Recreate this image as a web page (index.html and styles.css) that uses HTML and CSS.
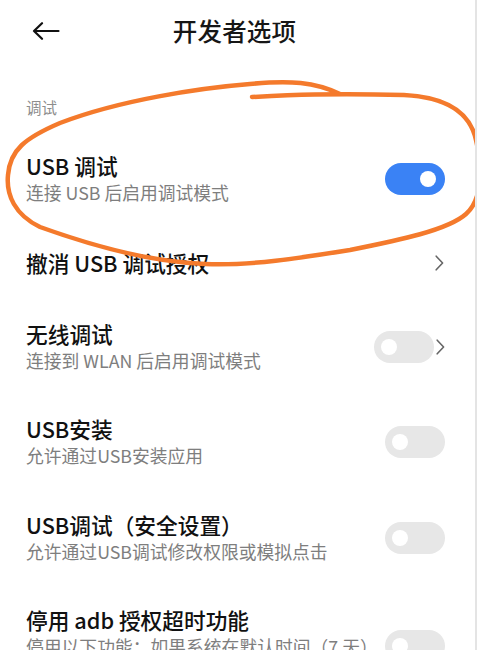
FILE: index.html
```html
<!DOCTYPE html>
<html lang="zh-CN">
<head>
<meta charset="utf-8">
<title>开发者选项</title>
<link rel="stylesheet" href="styles.css">
</head>
<body>
<div class="page">
  <header class="topbar">
    <svg class="back" width="28" height="18" viewBox="0 0 28 18" aria-hidden="true">
      <path d="M26.5 9 H2 M10 1.2 L2 9 L10 16.8" fill="none" stroke="#111" stroke-width="2.2" stroke-linecap="round" stroke-linejoin="round"/>
    </svg>
    <h1 class="title">开发者选项</h1>
  </header>

  <div class="section-label">调试</div>

  <div class="row two">
    <div class="texts">
      <div class="row-title">USB 调试</div>
      <div class="row-sub">连接 USB 后启用调试模式</div>
    </div>
    <div class="switch on"><span class="knob"></span></div>
  </div>

  <div class="row one">
    <div class="texts">
      <div class="row-title">撤消 USB 调试授权</div>
    </div>
    <svg class="chev" width="9" height="16" viewBox="0 0 9 16" aria-hidden="true"><path d="M1.2 1.2 L7.6 8 L1.2 14.8" fill="none" stroke="#666" stroke-width="1.6" stroke-linecap="round" stroke-linejoin="round"/></svg>
  </div>

  <div class="row two">
    <div class="texts">
      <div class="row-title">无线调试</div>
      <div class="row-sub">连接到 WLAN 后启用调试模式</div>
    </div>
    <div class="trail">
      <div class="switch"><span class="knob"></span></div>
      <svg class="chev" width="9" height="16" viewBox="0 0 9 16" aria-hidden="true"><path d="M1.2 1.2 L7.6 8 L1.2 14.8" fill="none" stroke="#666" stroke-width="1.6" stroke-linecap="round" stroke-linejoin="round"/></svg>
    </div>
  </div>

  <div class="row two">
    <div class="texts">
      <div class="row-title">USB安装</div>
      <div class="row-sub">允许通过USB安装应用</div>
    </div>
    <div class="switch"><span class="knob"></span></div>
  </div>

  <div class="row two">
    <div class="texts">
      <div class="row-title">USB调试（安全设置）</div>
      <div class="row-sub">允许通过USB调试修改权限或模拟点击</div>
    </div>
    <div class="switch"><span class="knob"></span></div>
  </div>

  <div class="row two">
    <div class="texts">
      <div class="row-title">停用 adb 授权超时功能</div>
      <div class="row-sub wrap">停用以下功能：如果系统在默认时间（7 天）内未重新连接，则自动撤消 USB 调试授权</div>
    </div>
    <div class="switch"><span class="knob"></span></div>
  </div>

  <svg class="scribble" width="477" height="650" viewBox="0 0 477 650" aria-hidden="true">
    <path d="M252 97 C290 95 330 93 404 95 C445 97 470 112 476 140 C483 170 482 200 466 214 C448 230 400 240 350 250 C300 258 250 266 205 264 C150 262 90 245 40 227 C15 215 6 195 8 175 C10 150 25 138 60 123 C120 100 200 88 250 84 C290 80 315 82 340 94" fill="none" stroke="#f47a2c" stroke-width="4.5" stroke-linecap="round" stroke-linejoin="round"/>
  </svg>
</div>
</body>
</html>
```

FILE: styles.css
```css
html, body {
  margin: 0;
  padding: 0;
  background: #ffffff;
}

body {
  font-family: "Noto Sans CJK SC", "Noto Sans", sans-serif;
  color: #111111;
}

.page {
  position: relative;
  width: 475px;
  height: 650px;
  overflow: hidden;
  border-right: 2px solid #e4e4e4;
  background: #ffffff;
}

.topbar {
  height: 62px;
  display: flex;
  align-items: center;
  justify-content: center;
  position: relative;
}

.back {
  position: absolute;
  left: 32px;
  top: 22px;
}

.title {
  margin: 0;
  font-size: 24.5px;
  font-weight: 500;
  line-height: 30px;
  letter-spacing: 0.2px;
  color: #161616;
  transform: translateX(-3px);
}

.section-label {
  margin-top: 35px;
  padding-left: 26px;
  font-size: 15.5px;
  line-height: 20px;
  color: #8d8d8d;
}

.row {
  display: flex;
  align-items: center;
  justify-content: space-between;
  padding-left: 26px;
  padding-right: 30px;
}

.row.two {
  padding-top: 22px;
  padding-bottom: 21.5px;
}

.row.one {
  padding-top: 23px;
  padding-bottom: 23px;
}

.section-label + .row {
  margin-top: 14px;
}

.texts {
  flex: 1;
  min-width: 0;
  margin-right: 16px;
}

.row-title {
  font-size: 21.7px;
  font-weight: 500;
  line-height: 26px;
  color: #111111;
  white-space: nowrap;
}

.row-sub {
  font-size: 17.8px;
  line-height: 26px;
  color: #7e7e7e;
  white-space: nowrap;
}

.row-sub.wrap {
  white-space: normal;
}

.trail {
  display: flex;
  align-items: center;
  gap: 2px;
  margin-right: -1px;
}

.chev {
  display: block;
  flex: none;
  margin-right: 1px;
}

.switch {
  flex: none;
  width: 60px;
  height: 32px;
  border-radius: 16px;
  background: #e7e7e7;
  display: flex;
  align-items: center;
  padding: 0 7px;
  box-sizing: border-box;
}

.switch .knob {
  width: 16px;
  height: 16px;
  border-radius: 50%;
  background: #ffffff;
}

.switch.on {
  background: #3a82f5;
  justify-content: flex-end;
  padding: 0 9px;
}

.scribble {
  position: absolute;
  left: 0;
  top: 0;
  pointer-events: none;
}
```
